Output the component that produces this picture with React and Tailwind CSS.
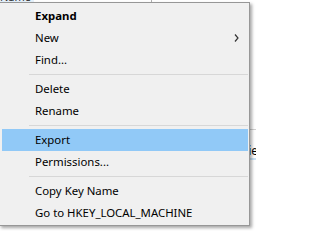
const font = { fontFamily: '"Noto Sans", "Open Sans", sans-serif' };

function Item({ label, bold, active, submenu }) {
  return (
    <div
      className={`flex h-[22px] items-center justify-between pl-[33px] pr-[9px] text-[11.4px] text-black ${
        active ? "bg-[#91c9f7]" : ""
      } ${bold ? "font-bold" : ""}`}
    >
      <span className="leading-none">{label}</span>
      {submenu && (
        <svg width="5" height="8" viewBox="0 0 5 8" fill="none">
          <path d="M1 0.5 L4 4 L1 7.5" stroke="#333" strokeWidth="1.2" />
        </svg>
      )}
    </div>
  );
}

function Separator() {
  return (
    <div className="flex h-[7px] items-center pl-[27px]">
      <div className="h-px w-full bg-[#d7d7d7]" />
    </div>
  );
}

export default function App() {
  return (
    <div
      className="relative h-[231px] w-[256px] overflow-hidden bg-white"
      style={font}
    >
      {/* window behind the menu */}
      <div className="absolute left-0 top-[-9px] h-[12px] w-[34px] bg-[#e5f1fb] text-[11px] leading-[12px] text-[#333]">
        Name
      </div>
      <div className="absolute left-[151px] top-0 h-[3px] w-px bg-[#b0b0b0]" />
      <div className="absolute right-0 top-[129px] h-px w-[8px] bg-[#d0d0d0]" />
      <div className="absolute right-[-2px] top-[145px] text-[12px] leading-none text-black">
        ie
      </div>
      <div className="absolute right-0 top-[158px] h-[2px] w-[6px] bg-[#cce4f7]" />

      {/* context menu */}
      <div className="relative ml-[-1px] mt-[2px] w-[251px] border border-[#979797] bg-[#f0f0f0] pb-[1px] pl-[2px] pr-px pt-[2px] shadow-[2px_2px_3px_rgba(0,0,0,0.35)]">
        <Item label="Expand" bold />
        <Item label="New" submenu />
        <Item label="Find..." />
        <Separator />
        <Item label="Delete" />
        <Item label="Rename" />
        <Separator />
        <Item label="Export" active />
        <Item label="Permissions..." />
        <Separator />
        <Item label="Copy Key Name" />
        <Item label="Go to HKEY_LOCAL_MACHINE" />
      </div>
    </div>
  );
}
